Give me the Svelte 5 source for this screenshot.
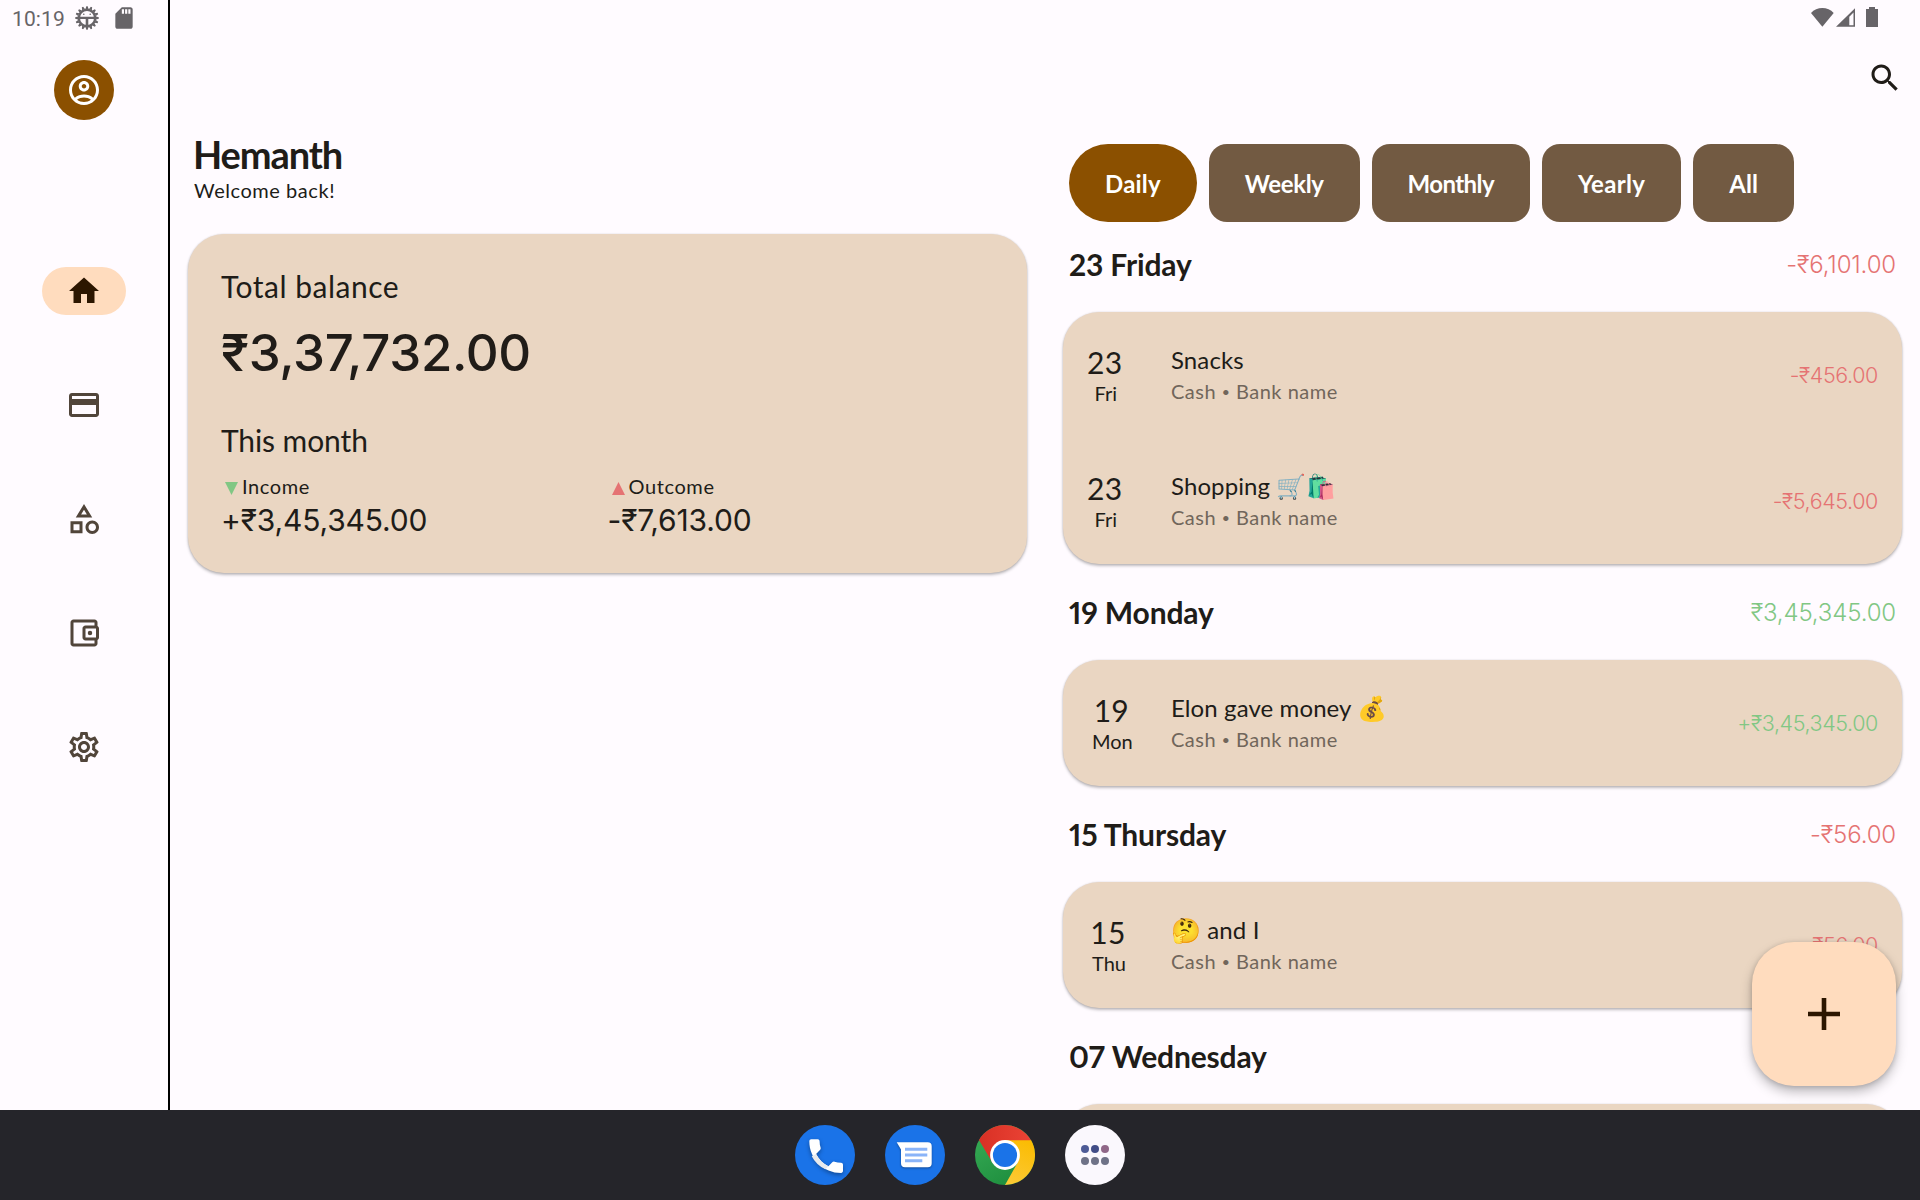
<script>
  const navIcons = [
    { name: 'Home', path: 'M10 20v-6h4v6h5v-8h3L12 3 2 12h3v8z' },
    { name: 'Accounts', path: 'M20 4H4c-1.11 0-1.99.89-1.99 2L2 18c0 1.11.89 2 2 2h16c1.11 0 2-.89 2-2V6c0-1.11-.89-2-2-2zm0 14H4v-6h16v6zm0-10H4V6h16v2z' },
    { name: 'Categories', path: 'M12 2l-5.5 9h11L12 2zm0 3.84L13.93 9h-3.87L12 5.84zM17.5 13c-2.49 0-4.5 2.01-4.5 4.5s2.01 4.5 4.5 4.5 4.5-2.01 4.5-4.5-2.01-4.5-4.5-4.5zm0 7c-1.38 0-2.5-1.12-2.5-2.5s1.12-2.5 2.5-2.5 2.5 1.12 2.5 2.5-1.12 2.5-2.5 2.5zM3 21.5h8v-8H3v8zm2-6h4v4H5v-4z' },
    { name: 'Budget', path: 'M21 7.28V5c0-1.1-.9-2-2-2H5c-1.11 0-2 .9-2 2v14c0 1.1.89 2 2 2h14c1.1 0 2-.9 2-2v-2.28c.59-.35 1-.98 1-1.72V9c0-.74-.41-1.38-1-1.72zM20 9v6h-7V9h7zM5 19V5h14v2h-6c-1.1 0-2 .9-2 2v6c0 1.1.9 2 2 2h6v2H5zM16 10.5a1.5 1.5 0 1 0 0 3 1.5 1.5 0 0 0 0-3z' },
    { name: 'Settings', path: 'M19.43 12.98c.04-.32.07-.64.07-.98s-.03-.66-.07-.98l2.11-1.65c.19-.15.24-.42.12-.64l-2-3.46c-.09-.16-.26-.25-.44-.25-.06 0-.12.01-.17.03l-2.49 1c-.52-.4-1.08-.73-1.69-.98l-.38-2.65C14.46 2.18 14.25 2 14 2h-4c-.25 0-.46.18-.49.42l-.38 2.65c-.61.25-1.17.59-1.69.98l-2.49-1c-.06-.02-.12-.03-.18-.03-.17 0-.34.09-.43.25l-2 3.46c-.13.22-.07.49.12.64l2.11 1.65c-.04.32-.07.65-.07.98s.03.66.07.98l-2.11 1.65c-.19.15-.24.42-.12.64l2 3.46c.09.16.26.25.44.25.06 0 .12-.01.17-.03l2.49-1c.52.4 1.08.73 1.69.98l.38 2.65c.03.24.24.42.49.42h4c.25 0 .46-.18.49-.42l.38-2.65c.61-.25 1.17-.59 1.69-.98l2.49 1c.06.02.12.03.18.03.17 0 .34-.09.43-.25l2-3.46c.12-.22.07-.49-.12-.64l-2.11-1.65zm-1.98-1.71c.04.31.05.52.05.73 0 .21-.02.43-.05.73l-.14 1.13.89.7 1.08.84-.7 1.21-1.27-.51-1.04-.42-.9.68c-.43.32-.84.56-1.25.73l-1.06.43-.16 1.13-.2 1.35h-1.4l-.19-1.35-.16-1.13-1.06-.43c-.43-.18-.83-.41-1.23-.71l-.91-.7-1.06.43-1.27.51-.7-1.21 1.08-.84.89-.7-.14-1.13c-.03-.31-.05-.54-.05-.74s.02-.43.05-.73l.14-1.13-.89-.7-1.08-.84.7-1.21 1.27.51 1.04.42.9-.68c.43-.32.84-.56 1.25-.73l1.06-.43.16-1.13.2-1.35h1.39l.19 1.35.16 1.13 1.06.43c.43.18.83.41 1.23.71l.91.7 1.06-.43 1.27-.51.7 1.21-1.07.85-.89.7.14 1.13zM12 8c-2.21 0-4 1.79-4 4s1.79 4 4 4 4-1.79 4-4-1.79-4-4-4zm0 6c-1.1 0-2-.9-2-2s.9-2 2-2 2 .9 2 2-.9 2-2 2z' },
  ];

  const filters = [
    { label: 'Daily', tracking: 0.2 },
    { label: 'Weekly', tracking: -0.35 },
    { label: 'Monthly', tracking: -0.6 },
    { label: 'Yearly', tracking: 0.3 },
    { label: 'All', tracking: 0.1 },
  ];
  let activeNav = $state('Home');
  let activeFilter = $state('Daily');

  const groups = [
    {
      title: '23 Friday', total: '-₹6,101.00', income: false,
      items: [
        { day: '23', week: 'Fri', title: 'Snacks', amount: '-₹456.00' },
        { day: '23', week: 'Fri', title: 'Shopping 🛒🛍️', amount: '-₹5,645.00' },
      ],
    },
    {
      title: '19 Monday', total: '₹3,45,345.00', income: true,
      items: [{ day: '19', week: 'Mon', title: 'Elon gave money 💰', amount: '+₹3,45,345.00' }],
    },
    {
      title: '15 Thursday', total: '-₹56.00', income: false,
      items: [{ day: '15', week: 'Thu', title: '🤔 and I', amount: '-₹56.00' }],
    },
    { title: '07 Wednesday', total: '', income: false, items: [] },
  ];

  const teeth = Array.from({ length: 16 }, (_, i) => i * 22.5);
</script>

<div class="screen">
  <div class="status">
    <div class="status-left">
      <span class="clock">10:19</span>
      <svg class="gear" viewBox="-12 -12 24 24">
        {#each teeth as angle}
          <path d="M-1.5 -9L-.7 -11.8H.7L1.5 -9z" transform="rotate({angle})" />
        {/each}
        <circle r="8.2" fill="none" stroke="currentColor" stroke-width="2.4" />
        <path d="M-8 -1.2H8V.9H1.3V9H-1.3V.9H-8z" />
        <circle cx="-3.2" cy="-3.8" r=".8" />
        <circle cx="3.2" cy="-3.8" r=".8" />
      </svg>
      <svg class="sd" viewBox="0 0 24 24"><path d="M18 2h-8L4.02 8 4 20c0 1.1.9 2 2 2h12c1.1 0 2-.9 2-2V4c0-1.1-.9-2-2-2zm-6 6h-2V4h2v4zm3 0h-2V4h2v4zm3 0h-2V4h2v4z" /></svg>
    </div>
    <svg class="signals" viewBox="0 0 67 20">
      <path d="M0 6A15.4 15.4 0 0 1 22.7 6L11.35 19.7z" />
      <path fill-rule="evenodd" d="M44 1.3V19.8H25zM42.5 5.5L38.3 9.8V18.3H42.5z" />
      <path d="M55 2h3V0h6v2h3v18H55z" />
    </svg>
  </div>

  <div class="body">
    <nav class="rail">
      <button class="avatar" aria-label="Profile">
        <svg viewBox="0 0 24 24"><path d="M12 2C6.48 2 2 6.48 2 12s4.48 10 10 10 10-4.48 10-10S17.52 2 12 2zM7.35 18.5C8.66 17.56 10.26 17 12 17s3.34.56 4.65 1.5C15.34 19.44 13.74 20 12 20s-3.34-.56-4.65-1.5zm10.79-1.38C16.45 15.8 14.32 15 12 15s-4.45.8-6.14 2.12C4.7 15.73 4 13.95 4 12c0-4.42 3.58-8 8-8s8 3.58 8 8c0 1.95-.7 3.73-1.86 5.12zM12 6c-1.93 0-3.5 1.57-3.5 3.5S10.07 13 12 13s3.5-1.57 3.5-3.5S13.93 6 12 6zm0 5c-.83 0-1.5-.67-1.5-1.5S11.17 8 12 8s1.5.67 1.5 1.5S12.83 11 12 11z" /></svg>
      </button>
      <div class="destinations">
        {#each navIcons as icon}
          <button class="destination" class:selected={activeNav === icon.name} aria-label={icon.name} onclick={() => (activeNav = icon.name)}>
            <svg viewBox="0 0 24 24"><path d={icon.path} /></svg>
          </button>
        {/each}
      </div>
    </nav>

    <main>
      <section class="overview">
        <h1>Hemanth</h1>
        <p class="welcome">Welcome back!</p>
        <article class="card balance">
          <div class="label">Total balance</div>
          <div class="total">₹3,37,732.00</div>
          <div class="label month">This month</div>
          <div class="flows">
            <div>
              <div class="flow-name">
                <svg class="down" viewBox="0 0 12 12"><path d="M0 0h12L6 12z" /></svg>Income
              </div>
              <div class="flow-value">+₹3,45,345.00</div>
            </div>
            <div>
              <div class="flow-name">
                <svg class="up" viewBox="0 0 12 12"><path d="M0 12h12L6 0z" /></svg>Outcome
              </div>
              <div class="flow-value">-₹7,613.00</div>
            </div>
          </div>
        </article>
      </section>

      <section class="history">
        <div class="appbar">
          <button class="search" aria-label="Search">
            <svg viewBox="0 0 24 24"><path d="M15.5 14h-.79l-.28-.27C15.41 12.59 16 11.11 16 9.5 16 5.91 13.09 3 9.5 3S3 5.91 3 9.5 5.91 16 9.5 16c1.61 0 3.09-.59 4.23-1.57l.27.28v.79l5 4.99L20.49 19l-4.99-5zm-6 0C7.01 14 5 11.99 5 9.5S7.01 5 9.5 5 14 7.01 14 9.5 11.99 14 9.5 14z" /></svg>
          </button>
        </div>
        <div class="chips">
          {#each filters as filter}
            <button
              class="chip"
              class:active={activeFilter === filter.label}
              style="letter-spacing: {filter.tracking}px"
              onclick={() => (activeFilter = filter.label)}>{filter.label}</button>
          {/each}
        </div>
        {#each groups as group}
          <header class="day-header">
            <h2>{group.title}</h2>
            <span class="sum" class:income={group.income}>{group.total}</span>
          </header>
          <article class="card entries">
            {#each group.items as item}
              <div class="row">
                <div class="date">
                  <span class="day">{item.day}</span>
                  <span class="week">{item.week}</span>
                </div>
                <div class="detail">
                  <div class="title">{item.title}</div>
                  <div class="account">Cash <span class="dot">•</span> Bank name</div>
                </div>
                <span class="amount" class:income={group.income}>{item.amount}</span>
              </div>
            {/each}
          </article>
        {/each}
      </section>
    </main>

    <button class="fab" aria-label="Add transaction">
      <svg viewBox="0 0 32 32"><path d="M0 13.7H13.7V0H18.3V13.7H32V18.3H18.3V32H13.7V18.3H0z" /></svg>
    </button>
  </div>

  <footer class="taskbar">
    <svg class="app" viewBox="0 0 60 60">
      <circle cx="30" cy="30" r="30" fill="#1a73e8" />
      <g transform="translate(8.7 8.7) scale(1.87)">
        <path class="lifted" fill="#fff" d="M6.62 10.79c1.44 2.83 3.76 5.14 6.59 6.59l2.2-2.2c.27-.27.67-.36 1.02-.24 1.12.37 2.33.57 3.57.57.55 0 1 .45 1 1V20c0 .55-.45 1-1 1-9.39 0-17-7.61-17-17 0-.55.45-1 1-1h3.5c.55 0 1 .45 1 1 0 1.25.2 2.45.57 3.57.11.35.03.74-.25 1.02l-2.2 2.2z" />
        <path fill="#e8eaed" d="M6.62 10.79c1.44 2.83 3.76 5.14 6.59 6.59L11.6 19Q6.6 16.6 4.3 12z" />
      </g>
    </svg>
    <svg class="app" viewBox="0 0 60 60">
      <circle cx="30" cy="30" r="30" fill="#1a73e8" />
      <path class="lifted" fill="#fff" d="M11.7 17.3H42.7a4 4 0 0 1 4 4V38.3a4 4 0 0 1-4 4H20a4 4 0 0 1-4-4V24.5z" />
      <path stroke="#8ab4f8" stroke-width="3" d="M20 24.2H42.3M20 30H42.3M20 35.7H37.3" />
    </svg>
    <svg class="app" viewBox="0 0 60 60">
      <defs>
        <linearGradient id="chrome-red"><stop offset="0" stop-color="#d93025" /><stop offset="1" stop-color="#ea4335" /></linearGradient>
        <linearGradient id="chrome-green" x1=".6" y1="1" x2=".1" y2=".2"><stop offset="0" stop-color="#1e8e3e" /><stop offset="1" stop-color="#34a853" /></linearGradient>
        <linearGradient id="chrome-yellow" x1=".3" y1="1" x2=".6" y2="0"><stop offset="0" stop-color="#fcc934" /><stop offset="1" stop-color="#fbbc04" /></linearGradient>
      </defs>
      <circle cx="30" cy="30" r="30" fill="url(#chrome-green)" />
      <path fill="url(#chrome-yellow)" d="M56 15A30 30 0 0 1 30 60L42.7 37.4 30 30V15z" />
      <path fill="url(#chrome-red)" d="M4 15A30 30 0 0 1 56 15.3H30V30L17.3 37.4z" />
      <circle cx="30" cy="30" r="14.9" fill="#fff" />
      <circle cx="30" cy="30" r="12.1" fill="#1a73e8" />
    </svg>
    <svg class="app" viewBox="0 0 60 60">
      <circle cx="30" cy="30" r="30" fill="#faf8fd" />
      <circle cx="20" cy="24" r="4" fill="#4d5b96" />
      <circle cx="30" cy="24" r="4" fill="#414d87" />
      <circle cx="40" cy="24" r="4" fill="#8f6788" />
      <circle cx="20" cy="36" r="4" fill="#6e7287" />
      <circle cx="30" cy="36" r="4" fill="#6e7287" />
      <circle cx="40" cy="36" r="4" fill="#6e7287" />
    </svg>
  </footer>
</div>

<style>
  :global(body) {
    margin: 0;
  }

  .screen {
    position: relative;
    display: flex;
    flex-direction: column;
    width: 1920px;
    height: 1200px;
    overflow: hidden;
    background: #fffbff;
    color: #201c18;
    font-family: Lato, 'Noto Sans', sans-serif;
  }

  button {
    padding: 0;
    border: 0;
    background: none;
    color: inherit;
    font: inherit;
  }

  svg {
    display: block;
    fill: currentColor;
  }

  h1,
  h2,
  p {
    margin: 0;
  }

  /* System status bar, drawn over the app */
  .status {
    position: absolute;
    inset: 0 0 auto 0;
    display: flex;
    justify-content: space-between;
    align-items: center;
    height: 36px;
    padding: 0 42px 0 12px;
    box-sizing: border-box;
    color: #676468;
  }

  .status-left {
    display: flex;
    align-items: center;
  }

  .clock {
    width: 63px;
    font-family: Roboto, sans-serif;
    font-size: 21px;
    line-height: 36px;
    letter-spacing: 0.1px;
    padding-top: 1px;
    box-sizing: border-box;
    height: 36px;
  }

  .gear {
    width: 24px;
    height: 24px;
  }

  .sd {
    width: 26px;
    height: 26px;
    margin-left: 12px;
  }

  .signals {
    width: 67px;
    height: 20px;
    margin-bottom: 2px;
  }

  .body {
    position: relative;
    display: flex;
    height: 1110px;
    overflow: hidden;
  }

  .rail {
    flex: none;
    display: flex;
    flex-direction: column;
    align-items: center;
    width: 168px;
    padding-top: 60px;
    box-sizing: content-box;
    border-right: 2px solid #000;
  }

  .avatar {
    display: grid;
    place-items: center;
    width: 60px;
    height: 60px;
    border-radius: 50%;
    background: #8b5000;
    color: #fff;
  }

  .avatar svg,
  .destination svg,
  .search svg {
    width: 36px;
    height: 36px;
  }

  .destinations {
    display: flex;
    flex-direction: column;
    gap: 66px;
    margin-top: 147px;
  }

  .destination {
    display: grid;
    place-items: center;
    width: 84px;
    height: 48px;
    border-radius: 24px;
    color: #51453a;
  }

  .destination.selected {
    background: #ffdcbe;
    color: #2c1600;
  }

  main {
    flex: 1;
    display: grid;
    grid-template-columns: 1fr 1fr;
    align-items: start;
  }

  .card {
    margin: 0 18px;
    border-radius: 36px;
    background: #ead6c2;
    box-shadow:
      0 2px 3px rgba(0, 0, 0, 0.25),
      0 0 2px rgba(0, 0, 0, 0.14);
  }

  .entries {
    min-height: 126px;
  }

  .overview {
    padding-top: 132px;
  }

  h1 {
    margin-left: 23px;
    font-size: 38px;
    font-weight: 700;
    line-height: 44px;
    letter-spacing: -1.1px;
  }

  .welcome {
    margin: 0 0 30px 24px;
    font-size: 20px;
    line-height: 28px;
    letter-spacing: 0.55px;
  }

  .balance {
    padding: 32px 33px 33px;
  }

  .label {
    font-size: 30px;
    line-height: 40px;
    letter-spacing: 0.5px;
  }

  .total {
    margin-top: 17px;
    font-family: Inter, sans-serif;
    font-size: 51px;
    font-weight: 460;
    line-height: 60px;
    letter-spacing: -0.35px;
  }

  .month {
    margin-top: 37px;
    letter-spacing: -0.1px;
  }

  .flows {
    display: grid;
    grid-template-columns: 1fr 1fr;
    margin-top: 12px;
  }

  .flow-name {
    display: flex;
    align-items: center;
    gap: 4px;
    padding-left: 4px;
    font-size: 20px;
    line-height: 28px;
    letter-spacing: 0.6px;
  }

  .flow-name svg {
    width: 13px;
    height: 13px;
    margin-top: 4px;
  }

  .down {
    color: #81c784;
  }

  .up {
    color: #e57373;
  }

  .flow-value {
    font-family: Inter, sans-serif;
    font-size: 30px;
    font-weight: 370;
    line-height: 40px;
    letter-spacing: -0.15px;
  }

  .appbar {
    display: flex;
    justify-content: flex-end;
    height: 84px;
    padding: 60px 17px 0 0;
    box-sizing: content-box;
  }

  .search {
    width: 36px;
    height: 36px;
  }

  .chips {
    display: flex;
    gap: 12px;
    margin: 0 0 -6px 24px;
  }

  .chip {
    height: 78px;
    padding: 0 36px;
    border-radius: 18px;
    background: #725a42;
    color: #fff;
    font-size: 24px;
    font-weight: 700;
  }

  .chip.active {
    border-radius: 39px;
    background: #8b5000;
  }

  .day-header {
    display: flex;
    justify-content: space-between;
    align-items: center;
    height: 96px;
    padding: 0 24px;
  }

  h2 {
    font-size: 30px;
    font-weight: 700;
    font-variant-numeric: proportional-nums;
    line-height: 40px;
    letter-spacing: -0.15px;
  }

  .sum,
  .amount {
    color: #e57373;
    font-family: Inter, sans-serif;
    font-weight: 300;
  }

  .sum {
    font-size: 24px;
    letter-spacing: -0.15px;
  }

  .amount {
    align-self: center;
    margin-left: auto;
    font-size: 21.5px;
    letter-spacing: -0.4px;
  }

  .sum.income,
  .amount.income {
    color: #81c784;
  }

  .row {
    display: flex;
    height: 126px;
    padding: 0 24px;
    box-sizing: border-box;
  }

  .date {
    flex: none;
    width: 84px;
    display: grid;
    grid-template-columns: max-content;
    align-content: start;
    justify-items: center;
    padding-top: 32px;
    box-sizing: border-box;
  }

  .day {
    font-size: 30px;
    line-height: 36px;
    letter-spacing: 0.3px;
  }

  .week {
    padding: 0 3px 0 5px;
    font-size: 20px;
    line-height: 26px;
  }

  .detail {
    padding-top: 33px;
  }

  .title {
    height: 33px;
    font-size: 24px;
    line-height: 30px;
    letter-spacing: 0.1px;
    white-space: nowrap;
  }

  .account {
    height: 26px;
    color: #71665b;
    font-size: 20px;
    line-height: 26px;
    letter-spacing: 0.5px;
  }

  .dot {
    font-size: 14px;
    line-height: 1;
    vertical-align: 2px;
  }

  .fab {
    position: absolute;
    right: 24px;
    bottom: 24px;
    display: grid;
    place-items: center;
    width: 144px;
    height: 144px;
    border-radius: 42px;
    background: #ffdcbe;
    color: #2c1600;
    box-shadow:
      0 6px 12px rgba(0, 0, 0, 0.26),
      0 1px 5px rgba(0, 0, 0, 0.16);
  }

  .fab svg {
    width: 32px;
    height: 32px;
  }

  .taskbar {
    display: flex;
    justify-content: center;
    align-items: center;
    gap: 30px;
    height: 90px;
    background: #25252a;
  }

  .app {
    width: 60px;
    height: 60px;
  }

  .lifted {
    filter: drop-shadow(0 1px 1px rgba(0, 0, 0, 0.35));
  }
</style>
